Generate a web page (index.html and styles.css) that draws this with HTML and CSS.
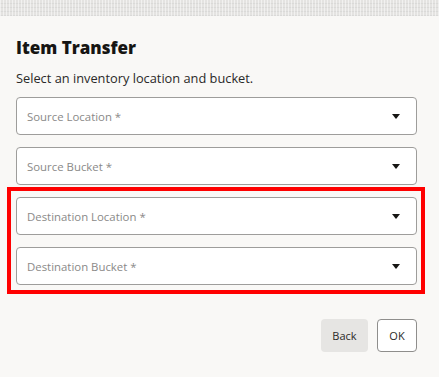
FILE: index.html
```html
<!DOCTYPE html>
<html>
<head>
<meta charset="utf-8">
<link rel="stylesheet" href="styles.css">
</head>
<body>
<div class="backdrop"></div>
<main class="dialog">
  <h1 class="title">Item Transfer</h1>
  <p class="subtitle">Select an inventory location and bucket.</p>
  <div class="fields">
    <div class="select"><span class="placeholder">Source Location *</span><span class="caret"></span></div>
    <div class="select"><span class="placeholder">Source Bucket *</span><span class="caret"></span></div>
    <div class="group">
      <div class="select"><span class="placeholder">Destination Location *</span><span class="caret"></span></div>
      <div class="select"><span class="placeholder">Destination Bucket *</span><span class="caret"></span></div>
      <div class="highlight"></div>
    </div>
  </div>
  <div class="actions">
    <button class="btn btn-back">Back</button>
    <button class="btn btn-ok">OK</button>
  </div>
</main>
</body>
</html>
```
FILE: styles.css
```css
html, body {
  margin: 0;
  padding: 0;
  width: 439px;
  height: 377px;
  overflow: hidden;
  background: #f9f8f6;
  font-family: "Open Sans", "Noto Sans", sans-serif;
}
.backdrop {
  height: 16px;
  background-color: #e4e3e1;
  background-image:
    repeating-linear-gradient(90deg, rgba(255,255,255,0.5) 0 1px, transparent 1px 3px),
    repeating-linear-gradient(0deg, rgba(200,200,200,0.35) 0 1px, transparent 1px 4px);
}
.dialog {
  padding: 20px 22px 0 16px;
}
.title {
  margin: 0;
  font-size: 17px;
  font-weight: 800;
  color: #161513;
  line-height: 24px;
}
.subtitle {
  margin: 9px 0 0;
  font-size: 12.8px;
  color: #2a2928;
  line-height: 18px;
}
.fields {
  margin-top: 10px;
  display: flex;
  flex-direction: column;
  gap: 12px;
  width: 401px;
}
.group {
  position: relative;
  display: flex;
  flex-direction: column;
  gap: 12px;
}
.select {
  box-sizing: border-box;
  height: 38px;
  background: #fff;
  border: 1px solid #9e9d9b;
  border-radius: 4px;
  display: flex;
  align-items: center;
  justify-content: space-between;
  padding: 0 16px 0 10px;
}
.placeholder {
  font-size: 11.4px;
  color: #8a8988;
}
.caret {
  width: 0;
  height: 0;
  border-left: 4px solid transparent;
  border-right: 4px solid transparent;
  border-top: 5px solid #161513;
}
.highlight {
  position: absolute;
  left: -9px;
  top: -10px;
  right: -8px;
  bottom: -9px;
  border: 4px solid #ff0000;
}
.actions {
  display: flex;
  justify-content: flex-end;
  gap: 9px;
  margin-top: 34px;
  width: 401px;
}
.btn {
  font-family: "Open Sans", "Noto Sans", sans-serif;
  font-size: 11px;
  color: #2a2928;
  height: 33px;
  border-radius: 4px;
  padding: 0;
}
.btn-back {
  width: 47px;
  background: #e6e5e3;
  border: none;
}
.btn-ok {
  width: 40px;
  background: #fff;
  border: 1px solid #8f8e8c;
}
```
